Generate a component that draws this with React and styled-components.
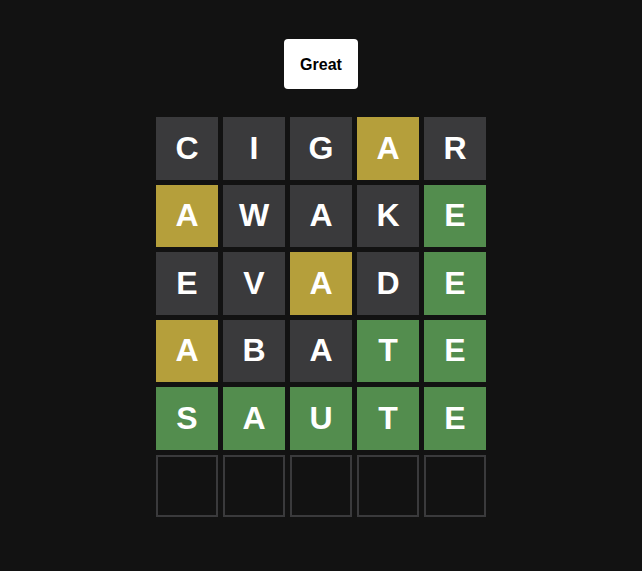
import React from "react";
import styled, { createGlobalStyle } from "styled-components";

const Global = createGlobalStyle`
  html, body { margin: 0; padding: 0; background: #121212; }
  body { font-family: "Liberation Sans", Arial, sans-serif; }
`;

const Page = styled.div`
  width: 642px;
  height: 571px;
  background: #121212;
  display: flex;
  flex-direction: column;
  align-items: center;
  padding-top: 39px;
  box-sizing: border-box;
`;

const Toast = styled.div`
  background: #ffffff;
  color: #000000;
  border-radius: 4px;
  font-size: 16px;
  line-height: 18px;
  font-weight: 700;
  width: 74px;
  height: 50px;
  padding-top: 2px;
  box-sizing: border-box;
  display: flex;
  align-items: center;
  justify-content: center;
`;

const Board = styled.div`
  margin-top: 28px;
  width: 330px;
  height: 400px;
  display: grid;
  grid-template-rows: repeat(6, 1fr);
  gap: 5px;
`;

const Row = styled.div`
  display: grid;
  grid-template-columns: repeat(5, 1fr);
  gap: 5px;
`;

const colors = {
  absent: "#3a3a3c",
  present: "#b59f3b",
  correct: "#538d4e",
};

const Tile = styled.div`
  display: flex;
  align-items: center;
  justify-content: center;
  box-sizing: border-box;
  font-size: 32px;
  font-weight: 700;
  color: #ffffff;
  text-transform: uppercase;
  background: ${(p) => (p.$state ? colors[p.$state] : "transparent")};
  border: ${(p) => (p.$state ? "none" : "2px solid #3a3a3c")};
`;

const guesses = [
  ["cigar", "aaapa"],
  ["awake", "paaac"],
  ["evade", "aapac"],
  ["abate", "paacc"],
  ["saute", "ccccc"],
];

const map = { a: "absent", p: "present", c: "correct" };

export default function App() {
  const rows = [...guesses];
  while (rows.length < 6) rows.push(null);
  return (
    <>
      <Global />
      <Page>
        <Toast>Great</Toast>
        <Board>
          {rows.map((r, i) => (
            <Row key={i}>
              {[0, 1, 2, 3, 4].map((j) => (
                <Tile key={j} $state={r ? map[r[1][j]] : null}>
                  {r ? r[0][j] : ""}
                </Tile>
              ))}
            </Row>
          ))}
        </Board>
      </Page>
    </>
  );
}
